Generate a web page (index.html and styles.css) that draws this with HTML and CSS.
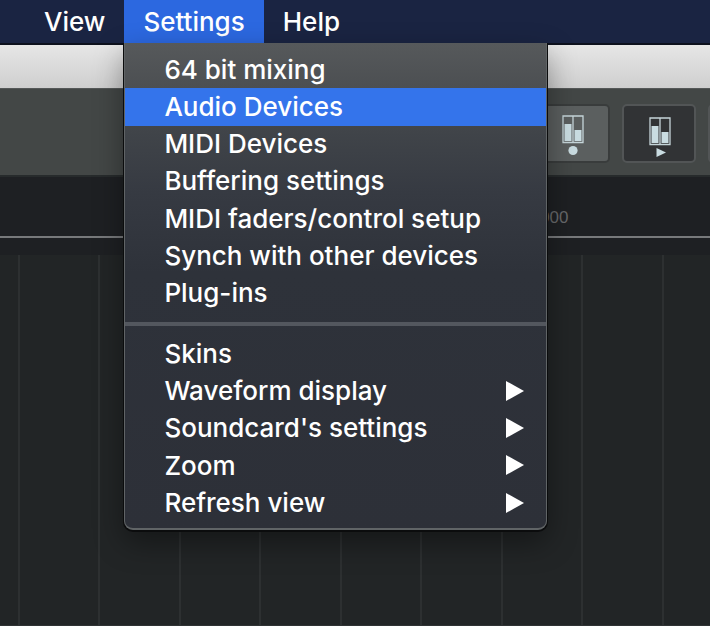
FILE: index.html
```html
<!DOCTYPE html>
<html lang="en">
<head>
<meta charset="utf-8">
<meta name="viewport" content="width=device-width, initial-scale=1">
<title>Settings menu</title>
<link rel="stylesheet" href="styles.css">
</head>
<body>
<nav class="menubar" aria-label="Application menu">
  <button class="menubar-item" type="button">View</button>
  <div class="menubar-group">
    <button class="menubar-item is-open" type="button" aria-expanded="true">Settings</button>
    <div class="menu">
      <ul class="menu-section menu-section-main">
        <li><button class="menu-item" type="button">64 bit mixing</button></li>
        <li><button class="menu-item is-active" type="button">Audio Devices</button></li>
        <li><button class="menu-item" type="button">MIDI Devices</button></li>
        <li><button class="menu-item" type="button">Buffering settings</button></li>
        <li><button class="menu-item" type="button">MIDI faders/control setup</button></li>
        <li><button class="menu-item" type="button">Synch with other devices</button></li>
        <li><button class="menu-item" type="button">Plug-ins</button></li>
      </ul>
      <hr class="menu-divider">
      <ul class="menu-section menu-section-more">
        <li><button class="menu-item" type="button">Skins</button></li>
        <li><button class="menu-item" type="button">Waveform display<svg class="arrow" viewBox="0 0 18 20" aria-hidden="true"><path d="M0 0L18 10L0 20Z"/></svg></button></li>
        <li><button class="menu-item" type="button">Soundcard's settings<svg class="arrow" viewBox="0 0 18 20" aria-hidden="true"><path d="M0 0L18 10L0 20Z"/></svg></button></li>
        <li><button class="menu-item" type="button">Zoom<svg class="arrow" viewBox="0 0 18 20" aria-hidden="true"><path d="M0 0L18 10L0 20Z"/></svg></button></li>
        <li><button class="menu-item" type="button">Refresh view<svg class="arrow" viewBox="0 0 18 20" aria-hidden="true"><path d="M0 0L18 10L0 20Z"/></svg></button></li>
      </ul>
    </div>
  </div>
  <button class="menubar-item" type="button">Help</button>
</nav>
<main class="window">
  <div class="titlebar"></div>
  <div class="toolbar">
    <button class="tool is-on" type="button" aria-label="Record mixer">
      <svg class="tool-icon" viewBox="0 0 22 44" aria-hidden="true">
        <path class="frame" d="M1 4H21V30.500H1ZM11 4V30.500"/>
        <path class="fill" d="M2.500 12H9.500V29H2.500ZM12.500 18H19.500V29H12.500Z"/>
        <circle class="fill" cx="11" cy="38.500" r="4.600"/>
      </svg>
    </button>
    <button class="tool" type="button" aria-label="Playback mixer">
      <svg class="tool-icon" viewBox="0 0 22 44" aria-hidden="true">
        <path class="frame" d="M2 6H22V32.500H2ZM12 6V32.500"/>
        <path class="fill" d="M3.500 14H10.500V31H3.500ZM13.500 20H20.500V31H13.500Z"/>
        <path class="fill" d="M8.500 36L18 40.500L8.500 45Z"/>
      </svg>
    </button>
    <button class="tool" type="button" aria-label="More tools"></button>
  </div>
  <div class="ruler"><span class="ruler-mark">000</span></div>
  <div class="ruler-base"></div>
  <div class="tracks"></div>
</main>
</body>
</html>
```
FILE: styles.css
```css
* {
  box-sizing: border-box;
}

body {
  margin: 0;
  min-height: 100vh;
  display: flex;
  flex-direction: column;
  overflow: hidden;
  background: #222526;
  color: #fff;
  font-family: Inter, "Liberation Sans", sans-serif;
  font-size: 26px;
  font-weight: 500;
}

button {
  margin: 0;
  border: 0;
  background: none;
  color: inherit;
  font: inherit;
}

.menubar {
  display: flex;
  height: 43px;
  padding-left: 25px;
  background: #1a2442;
}

.menubar-group {
  position: relative;
}

.menubar-item {
  height: 43px;
  padding: 0 19px;
}

.is-open {
  background: #2c68e0;
}

.menu {
  position: absolute;
  z-index: 1;
  top: 100%;
  left: 0;
  width: 423px;
  padding: 8px 0 6px;
  border: 1px solid #606466;
  border-top: 0;
  border-bottom-width: 2px;
  border-radius: 0 0 9px 9px;
  background: linear-gradient(#56595b 0, #4c4f52 45px, #404449 90px, #363a42 150px, #2e323a 230px, #2d3038 100%);
  box-shadow: 0 1px 0 1px #0b0c0d, 0 12px 30px rgba(0, 0, 0, 0.4);
}

.menu-section {
  display: grid;
  grid-auto-rows: 1fr;
  margin: 0;
  padding: 0;
  list-style: none;
}

.menu-section-main {
  height: 261px;
}

.menu-section-more {
  height: 187px;
}

.menu-item {
  display: flex;
  align-items: center;
  justify-content: space-between;
  width: 100%;
  height: 100%;
  padding: 0 22px 1px 39px;
  text-align: left;
  white-space: nowrap;
}

.is-active {
  background: #3474eb;
}

.menu-divider {
  height: 4px;
  margin: 10px 0 9px;
  border: 0;
  background: #53575e;
}

.arrow {
  width: 18px;
  height: 20px;
  fill: #fff;
}

.window {
  flex: 1;
  display: flex;
  flex-direction: column;
  border-top: 2px solid #0d111d;
}

.titlebar {
  height: 43px;
  background: linear-gradient(#e6e6e6, #cfcfcf);
}

.toolbar {
  display: flex;
  align-items: center;
  gap: 12px;
  height: 87px;
  padding: 3px 0 0 536px;
  overflow: hidden;
  border-top: 1px solid #555858;
  background: #434746;
}

.tool {
  display: flex;
  flex: none;
  align-items: center;
  justify-content: center;
  width: 74px;
  height: 59px;
  padding: 0;
  border: 2px solid #525556;
  border-radius: 5px;
  background: #313335;
}

.is-on {
  border-color: #393c3c;
  background: #5b5f5f;
}

.tool-icon {
  width: 22px;
  height: 44px;
  overflow: visible;
}

.frame {
  fill: none;
  stroke: #c5d5d9;
  stroke-width: 1.3;
}

.fill {
  fill: #c9dce1;
}

.ruler {
  height: 63px;
  padding: 31px 0 0 540px;
  border-top: 2px solid #272b2c;
  border-bottom: 2px solid #77797b;
  background: #1e2023;
  color: #67696b;
  font-family: "Liberation Sans", sans-serif;
  font-size: 17px;
  font-weight: 400;
  line-height: 20px;
}

.ruler-base {
  height: 17px;
  background: #1e2023;
}

.tracks {
  flex: 1;
  border-bottom: 1px solid #303334;
  background:
    linear-gradient(90deg, transparent 18px, #2d3031 18px, #2d3031 20px, transparent 20px, transparent 98px, #2d3031 98px, #2d3031 100px, transparent 100px) 0 0 / 161px 100%,
    #222526;
}
```
